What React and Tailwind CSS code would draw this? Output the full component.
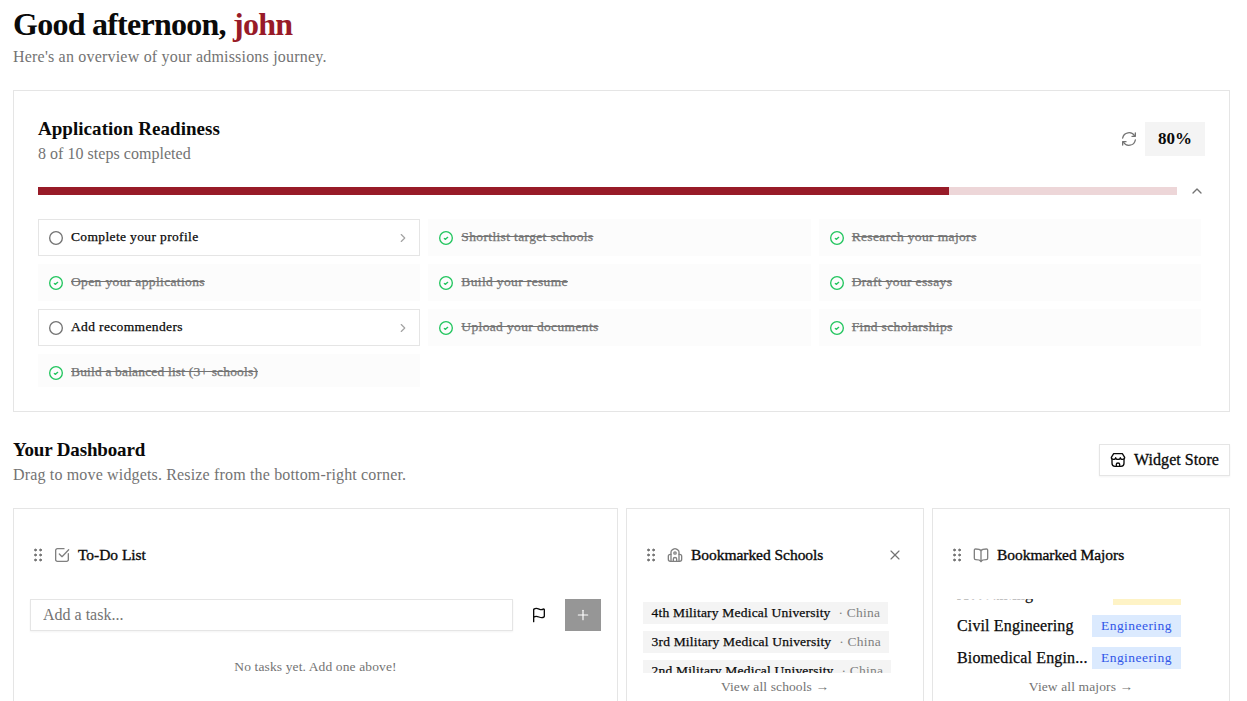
import { ChevronRight, ChevronUp, Flag, Plus, X } from "lucide-react";

const steps = [
  { label: "Complete your profile", done: false },
  { label: "Shortlist target schools", done: true },
  { label: "Research your majors", done: true },
  { label: "Open your applications", done: true },
  { label: "Build your resume", done: true },
  { label: "Draft your essays", done: true },
  { label: "Add recommenders", done: false },
  { label: "Upload your documents", done: true },
  { label: "Find scholarships", done: true },
  { label: "Build a balanced list (3+ schools)", done: true, tight: true },
];

const schools = [
  { name: "4th Military Medical University", country: "China" },
  { name: "3rd Military Medical University", country: "China" },
  { name: "2nd Military Medical University", country: "China" },
];

const majors = [
  { name: "Accounting", field: "Business", color: "bg-[#fef3c6] text-[#bb4d00] w-[68px]" },
  { name: "Civil Engineering", field: "Engineering", color: "bg-[#dbeafe] text-[#3056e8] w-[89px]" },
  { name: "Biomedical Engin...", field: "Engineering", color: "bg-[#dbeafe] text-[#3056e8] w-[89px]" },
];

function Icon({ size = 16, className = "", children }) {
  return (
    <svg
      width={size}
      height={size}
      viewBox="0 0 24 24"
      fill="none"
      stroke="currentColor"
      strokeWidth="2"
      strokeLinecap="round"
      strokeLinejoin="round"
      className={`shrink-0 ${className}`}
    >
      {children}
    </svg>
  );
}

function RefreshIcon() {
  return (
    <Icon className="text-[#737373]">
      <path d="M21.500 3v5h-5" />
      <path d="M2.500 10.500A9.700 9.700 0 0 1 20.500 7.500" />
      <path d="M2.500 21v-5h5" />
      <path d="M21.500 13.500A9.700 9.700 0 0 1 3.500 16.500" />
    </Icon>
  );
}

function DragIcon() {
  return (
    <Icon className="text-[#737373]">
      {[4.5, 12, 19.5].map((y) => (
        <g key={y} fill="currentColor" strokeWidth="1.5">
          <circle cx="8.200" cy={y} r="1.400" />
          <circle cx="15.800" cy={y} r="1.400" />
        </g>
      ))}
    </Icon>
  );
}

function TaskIcon() {
  return (
    <Icon className="text-[#808080]">
      <path d="M15 2.500H5a2.500 2.500 0 0 0-2.500 2.500v14A2.500 2.500 0 0 0 5 21.500h14a2.500 2.500 0 0 0 2.500-2.500v-9" />
      <path d="M8 10.500l4 4L22 4" />
    </Icon>
  );
}

function SchoolIcon() {
  return (
    <Icon className="text-[#808080]">
      <path d="M6 21.500V7.500C6 6 6.500 5.200 7.800 4.400l2-1.300c1.400-.900 3-.900 4.400 0l2 1.300C17.500 5.200 18 6 18 7.500v14" />
      <path d="M6 11H5c-2 0-3 1-3 3v4.500c0 2 1 3 3 3h14c2 0 3-1 3-3V14c0-2-1-3-3-3h-1" />
      <path d="M9.500 21.500V18c0-1.600 1-2.200 2.500-2.200s2.500.600 2.500 2.200v3.500" />
      <circle cx="12" cy="9" r="1.800" />
    </Icon>
  );
}

function BookIcon() {
  return (
    <Icon className="text-[#808080]">
      <path d="M12 6v16" />
      <path d="M12 5.500c-1.500-2-4-2.500-8-2.500-1.300 0-2 .700-2 2v12c0 1.300.700 2 2 2 4 0 6.500.500 8 2.500 1.500-2 4-2.500 8-2.500 1.300 0 2-.700 2-2V5c0-1.300-.700-2-2-2-4 0-6.500.500-8 2.500z" />
    </Icon>
  );
}

function StoreIcon() {
  return (
    <Icon>
      <path d="M3 11v6c0 3.500 1 4.500 4.500 4.500h9c3.500 0 4.500-1 4.500-4.500v-6" />
      <path d="M5.500 2.500h13L22 8c0 1.800-1.300 3-3 3-1.800 0-3.500-1-3.500-2.500C15.500 10 14 11 12 11S8.500 10 8.500 8.500C8.500 10 6.800 11 5 11c-1.700 0-3-1.200-3-3z" />
      <path d="M9.500 21.500V18.500c0-1.500 1-2 2.500-2s2.500.500 2.500 2v3" />
    </Icon>
  );
}

function Step({ step }) {
  return (
    <div
      className={`flex h-[37px] items-center gap-[7px] border px-2.5 ${
        step.done ? "border-transparent bg-[#fcfcfc] text-[#737373]" : "border-[#e5e5e5] text-[#0a0a0a]"
      }`}
    >
      <Icon className={`-ml-px ${step.done ? "text-[#22c55e]" : "text-[#737373]"}`}>
        <circle cx="12" cy="12" r="9.500" />
        {step.done && <path d="M9.500 12.800l1.700 1.200 3.300-3" />}
      </Icon>
      <span
        className={`-mt-px text-[13.5px] leading-4 [-webkit-text-stroke:0.25px] ${
          step.tight ? "tracking-[0.17px]" : "tracking-[0.36px]"
        } ${step.done ? "line-through" : ""}`}
      >
        {step.label}
      </span>
      {!step.done && <ChevronRight size={14} strokeWidth={2} className="-mr-px ml-auto text-[#a3a3a3]" />}
    </div>
  );
}

function WidgetTitle({ icon, children, closable }) {
  return (
    <div className="flex h-5 items-center">
      <DragIcon />
      <span className="ml-2 flex">{icon}</span>
      <h3 className="ml-2 text-[15.5px] leading-5 tracking-[-0.04px] [-webkit-text-stroke:0.35px]">{children}</h3>
      {closable && <X size={16} strokeWidth={1.75} className="ml-auto text-[#737373]" />}
    </div>
  );
}

export default function App() {
  return (
    <main className="h-[701px] overflow-hidden bg-white pl-[13px] pr-[17px] font-['Liberation_Serif',serif] text-[#0a0a0a]">
      <header className="pt-1.5">
        <h1 className="text-[32px] font-bold leading-9 tracking-[-0.75px]">
          Good afternoon, <span className="text-[#981b28]">john</span>
        </h1>
        <p className="-mb-0.5 mt-1 text-[16px] leading-[22px] tracking-[0.2px] text-[#737373]">
          Here's an overview of your admissions journey.
        </p>
      </header>

      <section className="mt-6 h-[322px] border border-[#e5e5e5] px-6 pt-6">
        <div className="flex items-center justify-between">
          <div>
            <h2 className="text-[19px] font-bold leading-7 tracking-[0.04px]">Application Readiness</h2>
            <p className="-mb-0.5 text-[16px] leading-[22px] tracking-[0.03px] text-[#737373]">
              8 of 10 steps completed
            </p>
          </div>
          <div className="flex items-center gap-2">
            <RefreshIcon />
            <span className="flex h-[34px] w-[60px] items-center justify-center bg-[#f4f4f4] text-[17px] font-bold">
              80%
            </span>
          </div>
        </div>

        <div className="mt-3 flex h-8 items-center">
          <div className="h-2 flex-1 bg-[#edd6d8]">
            <div className="h-full w-4/5 bg-[#981b28]" />
          </div>
          <ChevronUp size={16} strokeWidth={2} className="ml-3 text-[#737373]" />
        </div>

        <div className="mt-3 h-[168px] overflow-hidden pr-1">
          <div className="grid grid-cols-3 gap-2">
            {steps.map((step) => (
              <Step key={step.label} step={step} />
            ))}
          </div>
        </div>
      </section>

      <div className="mt-[22px] flex h-[52px] items-center justify-between">
        <div>
          <h2 className="text-[19px] font-bold leading-7 tracking-[-0.15px]">Your Dashboard</h2>
          <p className="-mb-0.5 text-[16px] leading-[22px] tracking-[0.16px] text-[#737373]">
            Drag to move widgets. Resize from the bottom-right corner.
          </p>
        </div>
        <button
          type="button"
          className="flex h-8 w-[131px] items-center gap-2 border border-[#e5e5e5] pl-2.5 shadow-xs"
        >
          <StoreIcon />
          <span className="whitespace-nowrap text-[16px] tracking-[0.06px] [-webkit-text-stroke:0.3px]">
            Widget Store
          </span>
        </button>
      </div>

      <div className="mt-[22px] grid h-[240px] grid-cols-[605px_298px_298px] gap-2">
        <section className="border border-[#e5e5e5] px-4 pt-9">
          <WidgetTitle icon={<TaskIcon />}>To-Do List</WidgetTitle>
          <div className="mt-[34px] flex h-8">
            <input
              type="text"
              placeholder="Add a task..."
              className="w-[483px] border border-[#e5e5e5] px-3 text-[16px] shadow-xs placeholder:text-[#737373]"
            />
            <button type="button" className="ml-2 flex w-9 items-center justify-center">
              <Flag size={16} strokeWidth={2} />
            </button>
            <button type="button" className="ml-2 flex w-9 items-center justify-center bg-[#969696] text-white">
              <Plus size={16} strokeWidth={1.75} />
            </button>
          </div>
          <p className="mt-7 text-center text-[13.5px] leading-4 tracking-[0.12px] text-[#737373]">
            No tasks yet. Add one above!
          </p>
        </section>

        <section className="border border-[#e5e5e5] px-4 pt-9">
          <div className="pr-1">
            <WidgetTitle icon={<SchoolIcon />} closable>
              Bookmarked Schools
            </WidgetTitle>
          </div>
          <div className="mt-[37px] flex h-[71px] flex-col items-start gap-[7px] overflow-hidden">
            {schools.map((school) => (
              <div
                key={school.name}
                className="flex h-[22px] shrink-0 items-center gap-2 bg-[#f4f4f4] pl-[8.5px] pr-2 text-[13.5px] leading-4 tracking-[0.2px]"
              >
                <span className="[-webkit-text-stroke:0.25px]">{school.name}</span>
                <span className="text-[#808080]">· {school.country}</span>
              </div>
            ))}
          </div>
          <p className="mt-1.5 text-center text-[13.5px] leading-4 tracking-[0.12px] text-[#737373]">
            View all schools →
          </p>
        </section>

        <section className="border border-[#e5e5e5] px-4 pt-9">
          <WidgetTitle icon={<BookIcon />}>Bookmarked Majors</WidgetTitle>
          <div className="mt-[34px] flex h-[75px] flex-col justify-end overflow-hidden pl-2 pr-8">
            {majors.map((major) => (
              <div key={major.name} className="flex h-8 shrink-0 items-center justify-between">
                <span className="whitespace-nowrap text-[16px] tracking-[0.14px] [-webkit-text-stroke:0.25px]">
                  {major.name}
                </span>
                <span
                  className={`flex h-[22px] shrink-0 items-center px-[9px] text-[13.5px] tracking-[0.45px] ${major.color}`}
                >
                  {major.field}
                </span>
              </div>
            ))}
          </div>
          <p className="mt-[5px] text-center text-[13.5px] leading-4 tracking-[0.12px] text-[#737373]">
            View all majors →
          </p>
        </section>
      </div>
    </main>
  );
}
